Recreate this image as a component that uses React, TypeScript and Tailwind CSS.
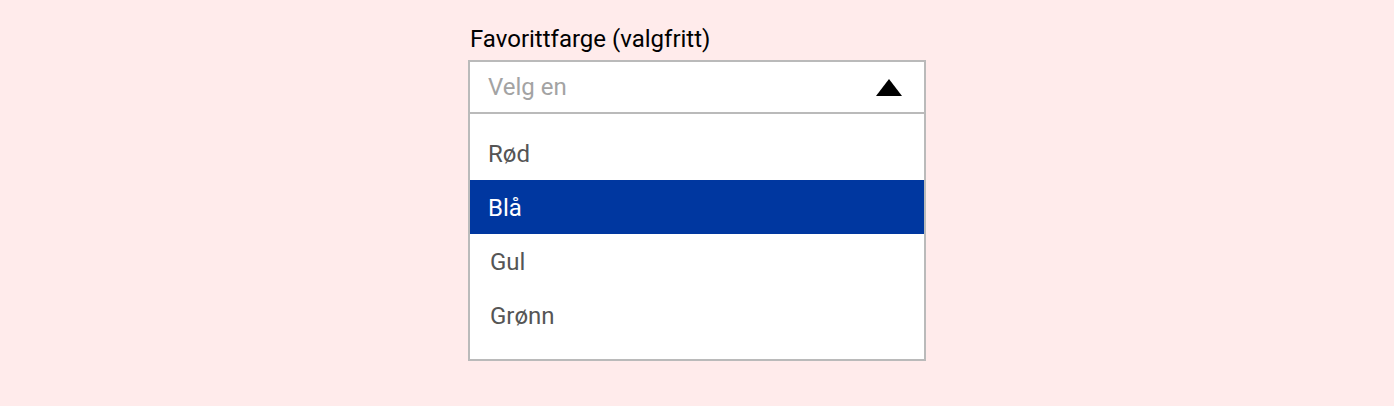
const options = [
  { label: "Rød", pad: "pl-[18px]" },
  { label: "Blå", pad: "pl-[18px]", selected: true },
  { label: "Gul", pad: "pl-[20px]" },
  { label: "Grønn", pad: "pl-[20px]" },
];

export default function App() {
  return (
    <div
      className="flex min-h-[406px] w-full justify-center bg-[#ffebeb] pt-[25px]"
      style={{ fontFamily: "Roboto, 'Noto Sans', sans-serif" }}
    >
      <div className="flex w-[458px] flex-col">
        <label className="mb-[7px] pl-[2px] text-[24px] leading-[28px] text-black">
          Favorittfarge (valgfritt)
        </label>

        <div className="flex h-[54px] items-center justify-between border-2 border-[#bababa] bg-white pl-[18px] pr-[22px]">
          <span className="text-[24px] leading-[28px] text-[#a3a3a3]">Velg en</span>
          <svg width="26" height="17" viewBox="0 0 26 17">
            <polygon points="13,0 26,17 0,17" fill="#000" />
          </svg>
        </div>

        <ul className="border-x-2 border-b-2 border-[#bababa] bg-white pb-[17px] pt-[12px]">
          {options.map((o) => (
            <li
              key={o.label}
              className={`h-[54px] ${o.pad} pt-[14px] text-[24px] leading-[28px] ${
                o.selected ? "bg-[#0037a0] text-white" : "text-[#555555]"
              }`}
            >
              {o.label}
            </li>
          ))}
        </ul>
      </div>
    </div>
  );
}
